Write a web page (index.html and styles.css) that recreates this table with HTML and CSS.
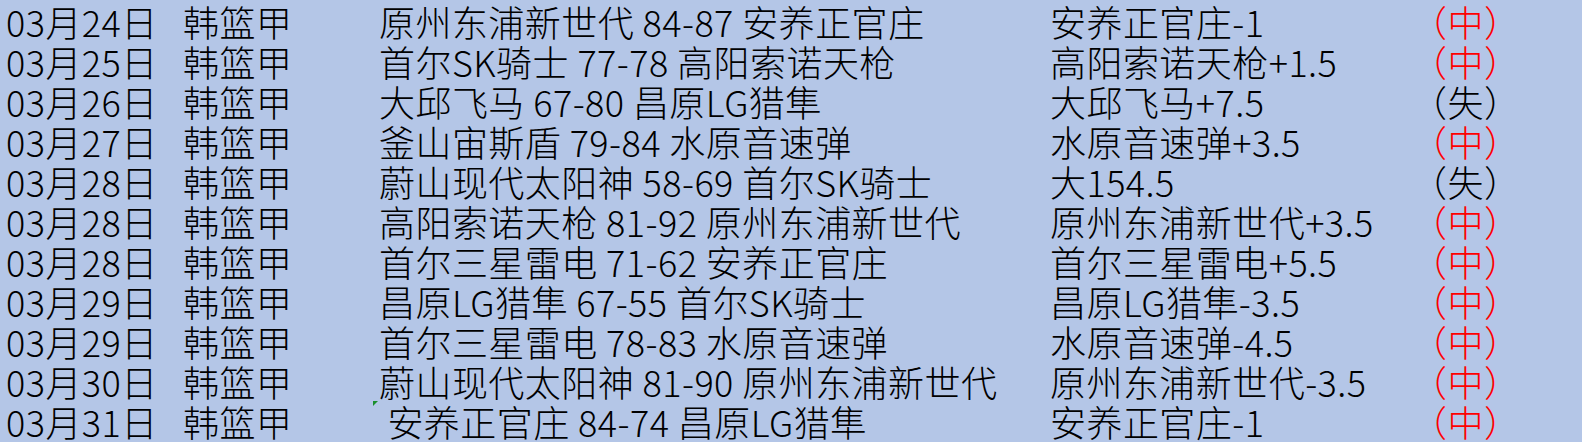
FILE: index.html
```html
<!DOCTYPE html>
<html lang="zh-CN">
<head>
<meta charset="utf-8">
<title>韩篮甲</title>
<link rel="stylesheet" href="styles.css">
</head>
<body>
<div class="sheet">
  <div class="row"><div class="cell">03月24日</div><div class="cell">韩篮甲</div><div class="cell">原州东浦新世代 84-87 安养正官庄</div><div class="cell">安养正官庄-1</div><div class="cell win">（中）</div></div>
  <div class="row"><div class="cell">03月25日</div><div class="cell">韩篮甲</div><div class="cell">首尔SK骑士 77-78 高阳索诺天枪</div><div class="cell">高阳索诺天枪+1.5</div><div class="cell win">（中）</div></div>
  <div class="row"><div class="cell">03月26日</div><div class="cell">韩篮甲</div><div class="cell">大邱飞马 67-80 昌原LG猎隼</div><div class="cell">大邱飞马+7.5</div><div class="cell">（失）</div></div>
  <div class="row"><div class="cell">03月27日</div><div class="cell">韩篮甲</div><div class="cell">釜山宙斯盾 79-84 水原音速弹</div><div class="cell">水原音速弹+3.5</div><div class="cell win">（中）</div></div>
  <div class="row"><div class="cell">03月28日</div><div class="cell">韩篮甲</div><div class="cell">蔚山现代太阳神 58-69 首尔SK骑士</div><div class="cell">大154.5</div><div class="cell">（失）</div></div>
  <div class="row"><div class="cell">03月28日</div><div class="cell">韩篮甲</div><div class="cell">高阳索诺天枪 81-92 原州东浦新世代</div><div class="cell">原州东浦新世代+3.5</div><div class="cell win">（中）</div></div>
  <div class="row"><div class="cell">03月28日</div><div class="cell">韩篮甲</div><div class="cell">首尔三星雷电 71-62 安养正官庄</div><div class="cell">首尔三星雷电+5.5</div><div class="cell win">（中）</div></div>
  <div class="row"><div class="cell">03月29日</div><div class="cell">韩篮甲</div><div class="cell">昌原LG猎隼 67-55 首尔SK骑士</div><div class="cell">昌原LG猎隼-3.5</div><div class="cell win">（中）</div></div>
  <div class="row"><div class="cell">03月29日</div><div class="cell">韩篮甲</div><div class="cell">首尔三星雷电 78-83 水原音速弹</div><div class="cell">水原音速弹-4.5</div><div class="cell win">（中）</div></div>
  <div class="row"><div class="cell">03月30日</div><div class="cell">韩篮甲</div><div class="cell">蔚山现代太阳神 81-90 原州东浦新世代</div><div class="cell">原州东浦新世代-3.5</div><div class="cell win">（中）</div></div>
  <div class="row"><div class="cell">03月31日</div><div class="cell">韩篮甲</div><div class="cell flagged"> 安养正官庄 84-74 昌原LG猎隼</div><div class="cell">安养正官庄-1</div><div class="cell win">（中）</div></div>
</div>
</body>
</html>
```
FILE: styles.css
```css
html, body {
  margin: 0;
  padding: 0;
  background: #b4c6e7;
}
body {
  width: 1582px;
  height: 442px;
  overflow: hidden;
  font-family: "Noto Sans CJK SC", "Noto Sans", sans-serif;
  font-size: 36px;
  font-weight: 300;
  letter-spacing: 0.45px;
  color: #000;
}
.sheet {
  padding-top: 1px;
}
.row {
  display: grid;
  grid-template-columns: 177px 196px 671px 361px 1fr;
  height: 40px;
  line-height: 40px;
}
.cell {
  position: relative;
  padding-left: 6px;
  white-space: pre;
  overflow: visible;
}
.win {
  color: #ff0000;
}
.flagged::before {
  content: "";
  position: absolute;
  left: 0;
  top: 0;
  width: 0;
  height: 0;
  border-top: 5px solid #1a8f2c;
  border-right: 5px solid transparent;
}
```
